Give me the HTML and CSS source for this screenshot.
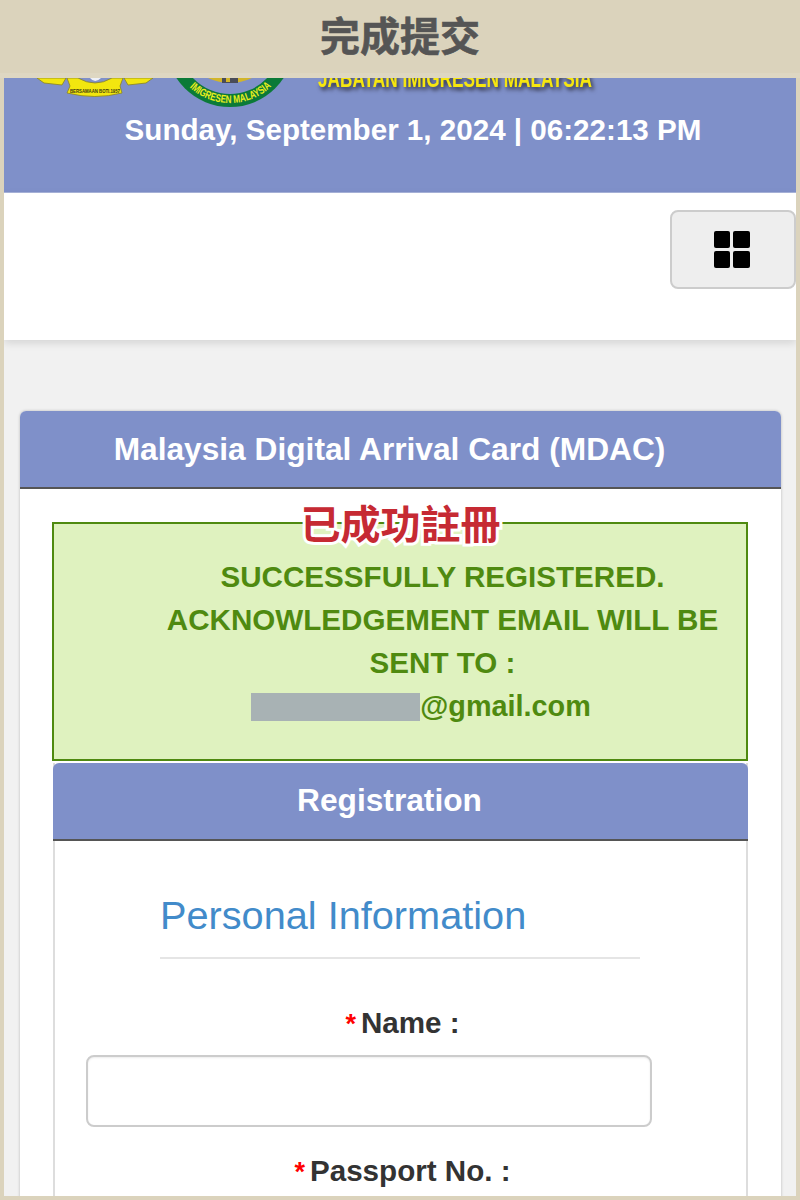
FILE: index.html
```html
<!DOCTYPE html>
<html lang="zh-Hant">
<head>
  <meta charset="UTF-8" />
  <meta name="viewport" content="width=device-width, initial-scale=1" />
  <title>完成提交</title>
  <link rel="stylesheet" href="styles.css">
</head>
<body>
  <div class="topbar">完成提交</div>

  <div class="page">
    <header class="hero">
      <!-- viewBox uses page coordinates, crests are cut off by the top bar -->
      <svg class="banner" viewBox="4 78 792 32" aria-hidden="true">
        <g class="ribbon">
          <path d="M37 78 L44 83 L62 85 L66 78 Z" />
          <path d="M67 78 L70 86 L67 93 Q95 100 122 93 L120 86 L123 78 L112 78 Q95 88 78 78 Z" />
          <path d="M124 78 L128 85 L146 83 L153 78 Z" />
        </g>
        <path class="ribbon-white" d="M90 78 Q95 84 101 78 Z" />
        <text class="ribbon-text" x="70" y="93" textLength="50" lengthAdjust="spacingAndGlyphs">BERSAMAAN BOTI.1957</text>

        <circle class="ring" cx="230" cy="43" r="64" />
        <circle class="ring-inner" cx="230" cy="43" r="51" />
        <path class="ring-gold" d="M208 78 Q230 88 252 78 Z" />
        <path class="ring-dark" d="M222 78 h4 v4 h4 v-4 h8 v5 h-16 Z" />
        <path id="ringArc" fill="none" d="M184 81.6 A 60 60 0 0 0 276 81.6" />
        <text class="ring-text">
          <textPath href="#ringArc" startOffset="8" textLength="90" lengthAdjust="spacingAndGlyphs">IMIGRESEN MALAYSIA</textPath>
        </text>

        <text class="dept" x="318" y="87" textLength="274" lengthAdjust="spacingAndGlyphs">JABATAN IMIGRESEN MALAYSIA</text>
      </svg>
      <div class="date">Sunday, September 1, 2024 | 06:22:13 PM</div>
    </header>

    <nav class="nav">
      <button class="menu-btn" type="button" aria-label="Menu">
        <span class="grid-icon"><i></i><i></i><i></i><i></i></span>
      </button>
    </nav>

    <main class="main">
      <section class="card">
        <div class="card-head">Malaysia Digital Arrival Card (MDAC)</div>
        <div class="card-body">
          <div class="stamp">已成功註冊</div>
          <div class="alert">
            <div>SUCCESSFULLY REGISTERED.</div>
            <div>ACKNOWLEDGEMENT EMAIL WILL BE</div>
            <div>SENT TO :</div>
            <div class="alert-email"><span class="mask"></span>@gmail.com</div>
          </div>

          <section class="inner-card">
            <div class="inner-head">Registration</div>
            <div class="inner-body">
              <h2 class="section-title">Personal Information</h2>
              <div class="field">
                <label class="field-label"><span class="req">*</span>Name :</label>
                <input class="field-input" type="text" />
              </div>
              <div class="field">
                <label class="field-label"><span class="req">*</span>Passport No. :</label>
                <input class="field-input" type="text" />
              </div>
            </div>
          </section>
        </div>
      </section>
    </main>
  </div>
</body>
</html>
```

FILE: styles.css
```css
* {
  box-sizing: border-box;
}

html, body {
  height: 1200px;
  overflow: hidden;
}

body {
  margin: 0;
  background-color: #dbd3bc;
  font-family: 'Liberation Sans', sans-serif;
  position: relative;
}

.topbar {
  height: 78px;
  padding-top: 10px;
  border-bottom: 5px solid #ded7c2;
  text-align: center;
  color: #555;
  font-family: 'Noto Sans CJK TC', sans-serif;
  font-size: 40px;
  font-weight: 700;
  line-height: 48px;
  -webkit-text-stroke: 0.6px #555;
}

.page {
  margin: 0 4px;
  height: 1118px;
  overflow: hidden;
  background-color: #f1f1f1;
}

/* header */
.hero {
  height: 115px;
  background-color: #7f90c9;
  border-bottom: 1px solid #a9b5dc;
  overflow: hidden;
}

.banner {
  display: block;
  width: 792px;
  height: 32px;
}

.ribbon path {
  fill: #f2e60f;
  stroke: #8a8420;
  stroke-width: 0.8;
}

.ribbon-white {
  fill: #eef0f6;
}

.ribbon-text {
  fill: #3c3a10;
  font-size: 5px;
  font-weight: 700;
}

.ring {
  fill: #0b7a38;
}

.ring-inner {
  fill: #7f90c9;
}

.ring-gold {
  fill: #d2b52a;
}

.ring-dark {
  fill: #4a4c58;
}

.ring-text {
  fill: #e9ee1c;
  font-size: 11px;
  font-weight: 700;
}

.dept {
  fill: #f6e60f;
  font-size: 26px;
  font-weight: 700;
  filter: drop-shadow(2px 3px 2px #2b2b3a);
}

.date {
  margin-top: 1px;
  padding-left: 26px;
  text-align: center;
  color: #fff;
  font-size: 29.6px;
  font-weight: 700;
  line-height: 38px;
}

/* nav */
.nav {
  height: 147px;
  padding-top: 17px;
  display: flex;
  justify-content: flex-end;
  align-items: flex-start;
  background-color: #fff;
  box-shadow: 0 3px 8px rgba(0, 0, 0, 0.12);
  position: relative;
}

.menu-btn {
  width: 126px;
  height: 79px;
  padding: 0 2px 0 0;
  display: flex;
  justify-content: center;
  align-items: center;
  background-color: #eee;
  border: 2px solid #ccc;
  border-radius: 8px;
}

.grid-icon {
  display: grid;
  grid-template-columns: 16px 17px;
  grid-template-rows: 17px 17px;
  gap: 3px;
}

.grid-icon i {
  background-color: #000;
  border-radius: 2px;
}

/* cards */
.main {
  padding: 71px 15px 0 16px;
}

.card {
  background-color: #fff;
  border-radius: 6px 6px 0 0;
  box-shadow: 0 0 3px rgba(0, 0, 0, 0.25);
}

.card-head,
.inner-head {
  height: 78px;
  padding-right: 22px;
  text-align: center;
  color: #fff;
  background-color: #7f90c9;
  font-size: 31.7px;
  font-weight: 700;
  line-height: 76px;
  border-bottom: 2px solid #555;
  border-radius: 6px 6px 0 0;
}

.card-body {
  padding: 33px 33px 0 32px;
  position: relative;
}

.stamp {
  position: absolute;
  top: 8px;
  left: 0;
  width: 100%;
  text-align: center;
  color: #c62a33;
  font-family: 'Noto Sans CJK TC', sans-serif;
  font-size: 40px;
  font-weight: 700;
  line-height: 50px;
  -webkit-text-stroke: 6px #fff;
  paint-order: stroke fill;
}

.alert {
  height: 239px;
  padding: 31px 0 0 85px;
  text-align: center;
  color: #4f8a10;
  background-color: #dff2bf;
  border: 2px solid #4f8a10;
  font-size: 29.6px;
  font-weight: 700;
  line-height: 43px;
}

.alert-email {
  margin-top: 1px;
  padding-right: 43px;
  font-size: 28.8px;
}

.mask {
  display: inline-block;
  width: 169px;
  height: 28px;
  vertical-align: -5px;
  background-color: #a8b2b4;
}

.inner-card {
  margin: 2px 0 0 1px;
  background-color: #fff;
  border-left: 2px solid #ddd;
  border-right: 2px solid #ddd;
}

.inner-head {
  margin: 0 -2px;
  line-height: 75px;
}

.inner-body {
  padding-top: 50px;
}

.section-title {
  margin: 0 0 0 105px;
  width: 480px;
  height: 68px;
  color: #428bca;
  font-size: 39.7px;
  font-weight: 400;
  line-height: 48px;
  border-bottom: 2px solid #e5e5e5;
}

.field {
  padding-top: 46px;
}

.field + .field {
  padding-top: 26px;
}

.field-label {
  display: block;
  text-align: center;
  color: #333;
  font-size: 29.6px;
  font-weight: 700;
  line-height: 36px;
  padding-left: 4px;
}

.req {
  color: #f00;
  font-size: 27px;
  margin-right: 5px;
}

.field-input {
  display: block;
  width: 566px;
  height: 72px;
  margin: 13px 0 0 31px;
  background-color: #fff;
  border: 2px solid #ccc;
  border-radius: 8px;
  box-shadow: inset 0 1px 2px rgba(0, 0, 0, 0.08);
}
```
